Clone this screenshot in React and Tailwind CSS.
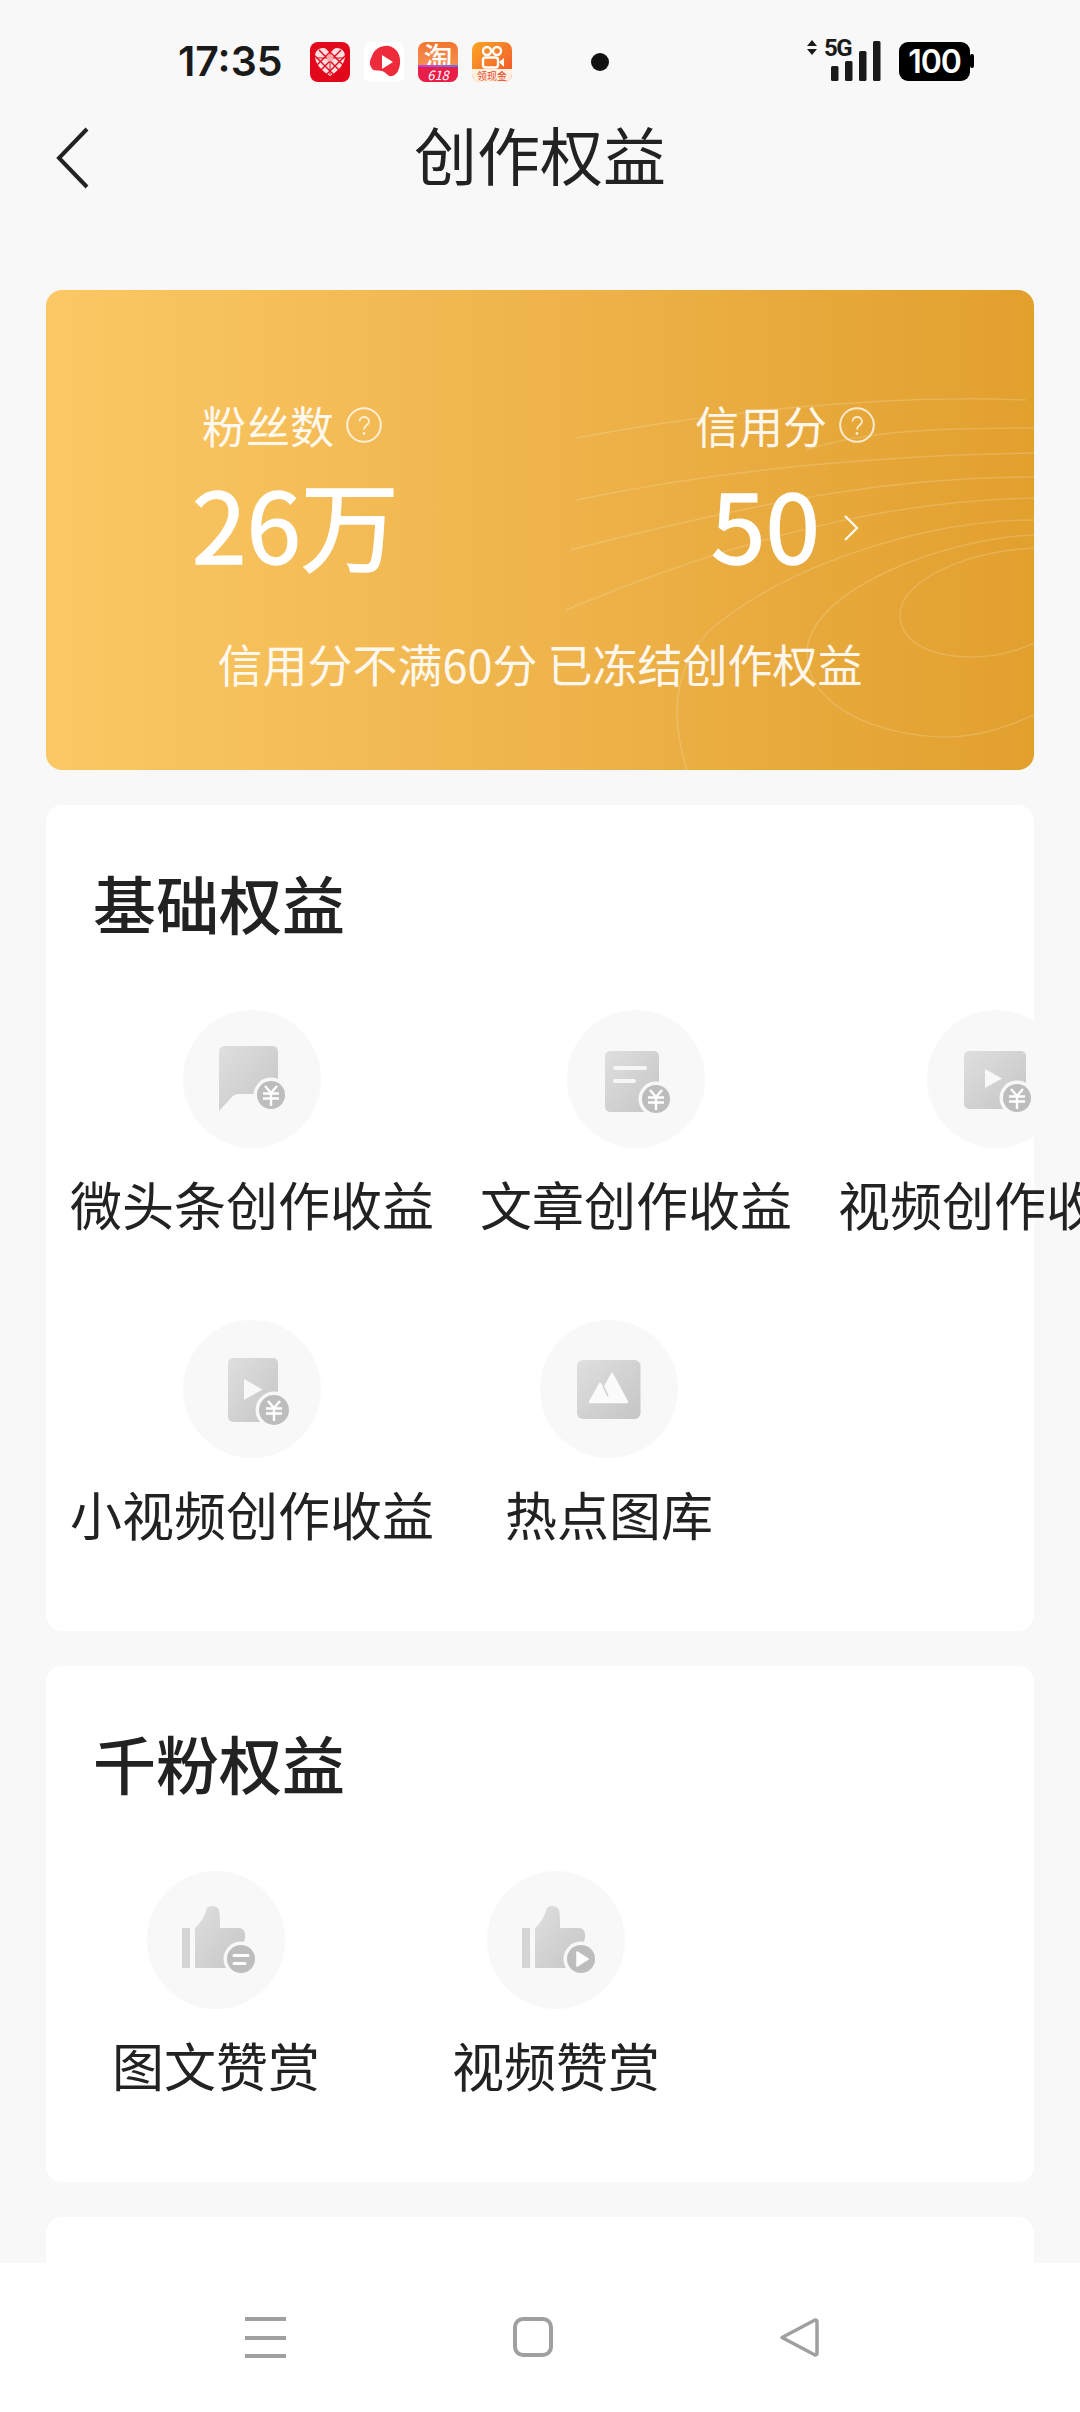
const Badge = ({ cx, cy, r = 14 }) => (
  <g>
    <circle cx={cx} cy={cy} r={r + 3.5} fill="#f8f8f8" />
    <circle cx={cx} cy={cy} r={r} fill="#bdbdbd" />
    <path d={`M${cx - 6} ${cy - 9}L${cx} ${cy - 2}L${cx + 6} ${cy - 9}M${cx - 8} ${cy - 1.5}H${cx + 8}M${cx - 8} ${cy + 3.5}H${cx + 8}M${cx} ${cy - 2}V${cy + 11}`} fill="none" stroke="#fff" strokeWidth="2.4" />
  </g>
);

const Grad = ({ id }) => (
  <defs>
    <linearGradient id={id} x1="0" y1="0" x2="1" y2="1">
      <stop offset="0" stopColor="#dfdfdf" />
      <stop offset="1" stopColor="#c5c5c5" />
    </linearGradient>
  </defs>
);

const Thumb = ({ id }) => (
  <>
    <Grad id={id} />
    <rect x="35" y="57" width="8" height="40" fill="#d4d4d4" />
    <path d="M48 97V57C54 52 58 44 60 37C62 34 70 34 72 39C73 44 73 50 73 57H92C97 57 100 63 97 70V97Z" fill={`url(#${id})`} />
  </>
);

const icons = {
  bubble: (
    <svg viewBox="0 0 138 138" className="w-full h-full">
      <Grad id="g1" />
      <path d="M36 42Q36 36 42 36H89Q95 36 95 42V84H56Q51 84 48 88L36 101Z" fill="url(#g1)" />
      <Badge cx={88} cy={85} />
    </svg>
  ),
  doc: (
    <svg viewBox="0 0 138 138" className="w-full h-full">
      <Grad id="g2" />
      <rect x="38" y="41" width="54" height="61" rx="5" fill="url(#g2)" />
      <path d="M48 58H78M48 71H67" stroke="#f6f6f6" strokeWidth="4" strokeLinecap="round" />
      <Badge cx={89} cy={89} />
    </svg>
  ),
  video: (
    <svg viewBox="0 0 138 138" className="w-full h-full">
      <Grad id="g3" />
      <rect x="37" y="41" width="62" height="58" rx="5" fill="url(#g3)" />
      <path d="M58 59L75 68.5L58 78Z" fill="#f8f8f8" />
      <Badge cx={90} cy={88} />
    </svg>
  ),
  short: (
    <svg viewBox="0 0 138 138" className="w-full h-full">
      <Grad id="g4" />
      <rect x="45" y="38" width="50" height="64" rx="5" fill="url(#g4)" />
      <path d="M61 59L79.5 69.5L61 80Z" fill="#f8f8f8" />
      <Badge cx={91} cy={90} r={15} />
    </svg>
  ),
  image: (
    <svg viewBox="0 0 138 138" className="w-full h-full">
      <Grad id="g5" />
      <rect x="37" y="40" width="63.5" height="59" rx="6" fill="url(#g5)" />
      <path d="M50 82L60 64L64 69L72 54L87 82Z" fill="#fbfbfb" stroke="#fbfbfb" strokeWidth="2.5" strokeLinejoin="round" />
      <path d="M63 66L68 76" stroke="#cfcfcf" strokeWidth="1.5" />
    </svg>
  ),
  thumbText: (
    <svg viewBox="0 0 138 138" className="w-full h-full">
      <Thumb id="g6" />
      <circle cx="94" cy="88" r="17.5" fill="#f8f8f8" />
      <circle cx="94" cy="88" r="14" fill="#bdbdbd" />
      <path d="M87 84.5H101M87 92.5H98" stroke="#fff" strokeWidth="3" strokeLinecap="round" />
    </svg>
  ),
  thumbPlay: (
    <svg viewBox="0 0 138 138" className="w-full h-full">
      <Thumb id="g7" />
      <circle cx="94" cy="88" r="17.5" fill="#f8f8f8" />
      <circle cx="94" cy="88" r="14" fill="#bdbdbd" />
      <path d="M90 81L101 88L90 95Z" fill="#fff" stroke="#fff" strokeWidth="1.5" strokeLinejoin="round" />
    </svg>
  ),
};

const Benefit = ({ icon, label, width }) => (
  <div className="flex flex-col items-center shrink-0" style={{ width }}>
    <div className="w-[138px] h-[138px] rounded-full bg-[#f8f8f8]">{icons[icon]}</div>
    <div className="mt-5 text-[52px] leading-[72px] whitespace-nowrap text-[#222]">{label}</div>
  </div>
);

const Question = () => (
  <svg viewBox="0 0 36 36" className="w-9 h-9 shrink-0">
    <circle cx="18" cy="18" r="16.8" fill="none" stroke="#fff" strokeOpacity="0.85" strokeWidth="2" />
    <path d="M13.5 14.5C13.5 8.5 23 8.5 23 14.5C23 18 18 18 18 22.5" fill="none" stroke="#fff" strokeOpacity="0.85" strokeWidth="1.8" />
    <circle cx="18" cy="26.5" r="1.4" fill="#fff" fillOpacity="0.85" />
  </svg>
);

const CardTitle = ({ children }) => (
  <h2 className="pl-[47px] text-[63px] leading-[72px] font-medium text-[#222]">{children}</h2>
);

export default function App() {
  return (
    <div className="w-[1080px] h-[2412px] flex flex-col overflow-hidden bg-[#f8f8f8] font-['Noto_Sans_CJK_SC','Noto_Sans',sans-serif]">
      <main className="flex-1 min-h-0 overflow-hidden">
        {/* status bar */}
        <div className="h-[100px] relative">
          <div className="absolute left-[178px] top-[36px] font-['Inter',sans-serif] font-semibold text-[41px] leading-[50px] text-[#1a1a1a]">17:35</div>
          <div className="absolute left-[310px] top-[42px] flex gap-[14px]">
            <svg viewBox="0 0 40 40" className="w-10 h-10">
              <rect width="40" height="40" rx="8" fill="#e2071b" />
              <path d="M20 34C12 29 5 22 5 14C5 9 9 6 13 6C16 6 19 8 20 10C21 8 24 6 27 6C31 6 35 9 35 14C35 22 28 29 20 34Z" fill="#fbdfe0" />
              <path d="M9 8L31 30M15 5L36 26M4 13L25 34M31 8L9 30M25 5L4 26M36 13L15 34" stroke="#e2071b" strokeWidth="1.4" />
              <path d="M20 8V33M6 16H34" stroke="#e2071b" strokeWidth="1" />
              <circle cx="20" cy="16" r="3.5" fill="#f7a9ae" />
            </svg>
            <svg viewBox="0 0 40 40" className="w-10 h-10">
              <rect width="40" height="40" rx="6" fill="#fff" />
              <path d="M8 14C10 7 18 3 25 4C33 6 37 13 36 22C35 28 33 33 28 34C24 35 22 30 18 29C13 28 9 30 7 25C5 21 6 18 8 14Z" fill="#ee2b3b" />
              <path d="M18 13L29 20L18 27Z" fill="#fff" />
            </svg>
            <div className="w-10 h-10 rounded-lg relative bg-gradient-to-b from-[#f2752d] to-[#f5a066]">
              <div className="absolute left-0 right-0 top-[-4px] text-center text-[29px] leading-[36px] font-medium text-white">淘</div>
              <div className="absolute left-0 right-0 bottom-[14px] h-[3px] bg-gradient-to-r from-[#c23ad0] to-[#5a78e0]" />
              <div className="absolute left-0 right-0 bottom-0 h-[15px] rounded-b-lg bg-[#e81d4a] text-center text-[13px] leading-[15px] italic text-white">618</div>
            </div>
            <div className="w-10 h-10 rounded-lg relative bg-gradient-to-br from-[#fba424] to-[#ee4a2b]">
              <svg viewBox="0 0 40 40" className="absolute inset-0 w-full h-full">
                <circle cx="15" cy="9" r="4" fill="none" stroke="#fff" strokeWidth="2.4" />
                <circle cx="25" cy="9" r="4" fill="none" stroke="#fff" strokeWidth="2.4" />
                <rect x="11" y="15.5" width="15" height="10" rx="2.5" fill="none" stroke="#fff" strokeWidth="2.4" />
                <path d="M27 20L32 16V25Z" fill="#fff" />
              </svg>
              <div className="absolute left-0 right-0 bottom-0 h-[13px] rounded-b-lg bg-[#fff1df] text-center text-[10px] leading-[13px] whitespace-nowrap text-[#e8452b]">领现金</div>
            </div>
          </div>
          <div className="absolute left-[591px] top-[53px] w-[18px] h-[18px] rounded-full bg-[#111]" />
          <svg viewBox="0 0 170 45" className="absolute left-[805px] top-[38px] w-[170px] h-[45px]">
            <path d="M2 8L7 2L12 8ZM2 11L7 17L12 11Z" fill="#1a1a1a" />
            <rect x="26" y="28" width="7.5" height="15" rx="1.5" fill="#1a1a1a" />
            <rect x="40" y="23" width="7.5" height="20" rx="1.5" fill="#1a1a1a" />
            <rect x="54" y="13" width="7.5" height="30" rx="1.5" fill="#1a1a1a" />
            <rect x="68" y="3" width="7.5" height="40" rx="1.5" fill="#1a1a1a" />
            <rect x="94" y="4" width="71" height="39" rx="9" fill="#000" />
            <rect x="165" y="16" width="4" height="14" rx="2" fill="#000" />
          </svg>
          <div className="absolute left-[824px] top-[37px] font-['Roboto',sans-serif] font-bold text-[24px] leading-[23px] tracking-[-1.5px] text-[#1a1a1a]">5G</div>
          <div className="absolute left-[899px] top-[42px] w-[71px] h-[39px] text-center font-['Inter',sans-serif] font-semibold text-[32px] leading-[39px] tracking-[-1px] text-white">100</div>
        </div>

        {/* header */}
        <header className="h-[114px] relative flex items-center justify-center pb-2">
          <svg viewBox="0 0 34 62" className="absolute left-[56px] top-[27px] w-[34px] h-[62px]">
            <path d="M31 2L3 31L31 60" fill="none" stroke="#222" strokeWidth="4" />
          </svg>
          <h1 className="text-[63px] leading-[80px] text-[#222]">创作权益</h1>
        </header>

        {/* gold card */}
        <section className="relative mx-[46px] mt-[76px] h-[480px] rounded-2xl overflow-hidden bg-gradient-to-r from-[#fbc865] to-[#e2a02d] text-white">
          <svg viewBox="0 0 988 480" className="absolute inset-0 w-full h-full" fill="none" stroke="#fff" strokeOpacity="0.17" strokeWidth="1.5">
            <path d="M988 258C920 262 854 290 854 325C854 355 890 367 925 367C950 367 975 360 988 353" />
            <path d="M988 245C900 248 761 300 761 363C761 420 840 447 900 447C935 447 965 435 988 425" />
            <path d="M988 230C880 230 740 275 664 340C625 380 625 430 641 480" />
            <path d="M988 208C850 210 700 245 520 320" />
            <path d="M988 187C860 187 740 205 524 260" />
            <path d="M988 163C860 165 700 175 530 210" />
            <path d="M988 138C900 138 820 140 760 160" />
            <path d="M980 110C880 105 700 115 530 148" />
          </svg>
          <div className="relative flex flex-col">
            <div className="flex h-[340px]">
              <div className="flex flex-col w-[604px] pl-[146px]">
                <div className="mt-[103px] ml-[10px] flex items-center gap-3 text-[44px] leading-[64px] opacity-90">
                  <span>粉丝数</span>
                  <Question />
                </div>
                <div className="mt-[4px] text-[98px] leading-[120px] [-webkit-text-stroke:1.5px_white]">26万</div>
              </div>
              <div className="flex flex-col">
                <div className="mt-[103px] ml-[45px] flex items-center gap-3 text-[44px] leading-[64px] opacity-90">
                  <span>信用分</span>
                  <Question />
                </div>
                <div className="mt-[4px] ml-[61px] flex items-center gap-[23px] text-[98px] leading-[120px] [-webkit-text-stroke:1.5px_white]">
                  <span>50</span>
                  <svg viewBox="0 0 16 28" className="w-4 h-7 mt-[14px]">
                    <path d="M2 2L14 14L2 26" fill="none" stroke="#fff" strokeOpacity="0.9" strokeWidth="2.4" />
                  </svg>
                </div>
              </div>
            </div>
            <div className="mt-[4px] text-center text-[45px] leading-[60px] whitespace-nowrap opacity-90">信用分不满60分 已冻结创作权益</div>
          </div>
        </section>

        {/* basic benefits */}
        <section className="relative mx-[46px] mt-[35px] h-[826px] pt-[61px] rounded-2xl bg-white">
          <CardTitle>基础权益</CardTitle>
          <div className="mt-[72px] pl-6 flex gap-[46px]">
            <Benefit icon="bubble" label="微头条创作收益" width={364} />
            <Benefit icon="doc" label="文章创作收益" width={312} />
            <div className="flex flex-col shrink-0 w-[312px]">
              <div className="w-[196px] h-[138px] overflow-hidden pl-[89px]">
                <div className="w-[138px] h-[138px] rounded-full bg-[#f8f8f8]">{icons.video}</div>
              </div>
              <div className="mt-5 text-[52px] leading-[72px] whitespace-nowrap text-[#222]">视频创作收益</div>
            </div>
          </div>
          <div className="mt-[80px] pl-6 flex gap-[71px]">
            <Benefit icon="short" label="小视频创作收益" width={364} />
            <Benefit icon="image" label="热点图库" width={208} />
          </div>
        </section>

        {/* fan benefits */}
        <section className="mx-[46px] mt-[35px] h-[516px] pt-[60px] rounded-2xl bg-white">
          <CardTitle>千粉权益</CardTitle>
          <div className="mt-[73px] pl-[66px] flex gap-[132px]">
            <Benefit icon="thumbText" label="图文赞赏" width={208} />
            <Benefit icon="thumbPlay" label="视频赞赏" width={208} />
          </div>
        </section>

        <section className="mx-[46px] mt-[35px] h-[300px] rounded-2xl bg-white" />
      </main>

      {/* navigation bar */}
      <nav className="h-[149px] shrink-0 relative bg-white">
        <div className="absolute left-[245px] top-[54px] w-[41px] h-[41px] flex flex-col justify-between">
          <div className="h-1 bg-[#a0a0a0]" />
          <div className="h-1 bg-[#a0a0a0]" />
          <div className="h-1 bg-[#a0a0a0]" />
        </div>
        <div className="absolute left-[513px] top-[54px] w-10 h-10 rounded-[10px] border-4 border-[#a0a0a0]" />
        <svg viewBox="0 0 40 41" className="absolute left-[779px] top-[54px] w-10 h-[41px]">
          <path d="M36 3L3 20.5L36 38Q38 38 38 36V5Q38 3 36 3Z" fill="none" stroke="#a0a0a0" strokeWidth="3.5" strokeLinejoin="round" />
        </svg>
      </nav>
    </div>
  );
}
